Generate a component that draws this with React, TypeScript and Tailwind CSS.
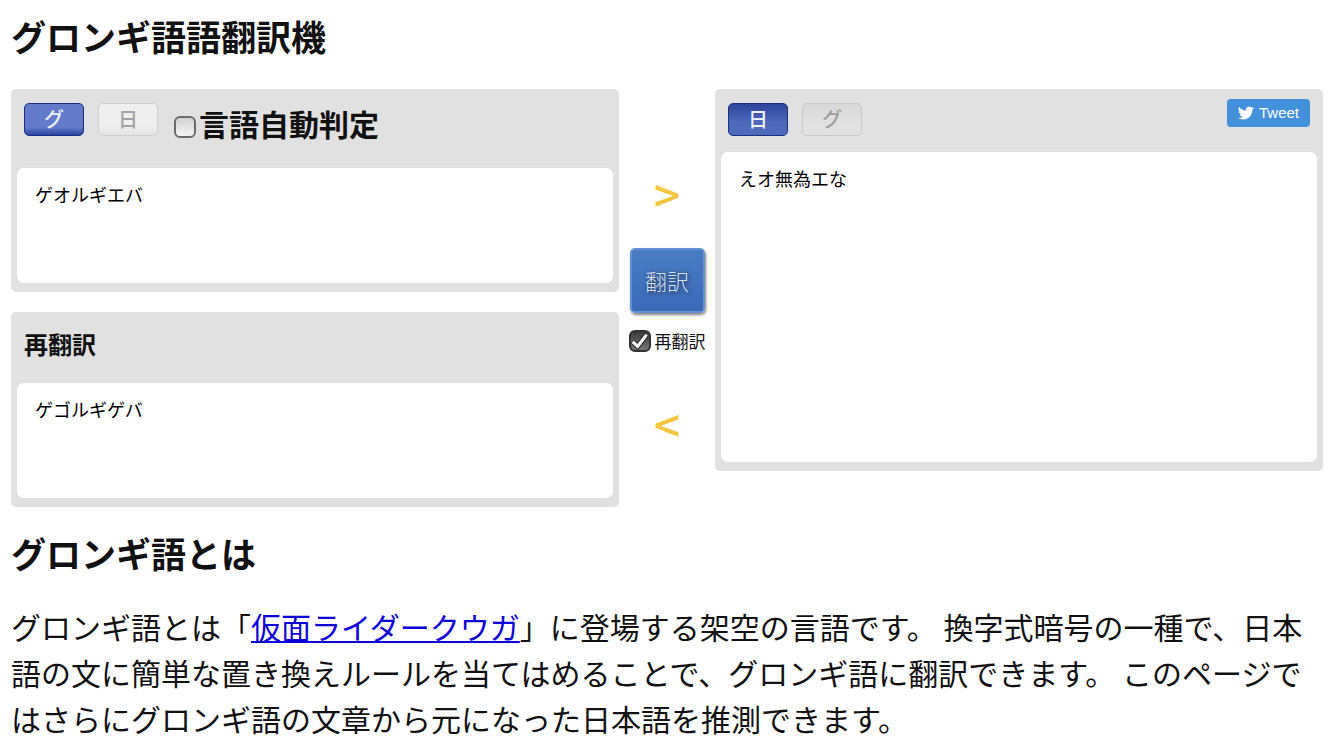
import { useState } from "react";
import type { ReactNode } from "react";

const HEADING = "text-[35px] leading-[50px] font-bold";

interface LangButtonProps {
  className: string;
  pressed: boolean;
  children: ReactNode;
}

function LangButton({ className, pressed, children }: LangButtonProps) {
  return (
    <button
      type="button"
      aria-pressed={pressed}
      className={`flex h-[33px] w-[60px] items-center justify-center rounded-[5px] border pb-[2px] text-[20px] leading-none font-medium ${className}`}
    >
      {children}
    </button>
  );
}

interface TextPanelProps {
  label: string;
  defaultValue: string;
  headerClass: string;
  areaClass: string;
  children: ReactNode;
}

function TextPanel({ label, defaultValue, headerClass, areaClass, children }: TextPanelProps) {
  return (
    <section className="rounded-[5px] bg-[#e1e1e1] px-[6px] pb-[9px]">
      <div className={`flex px-[7px] ${headerClass}`}>{children}</div>
      <div className="h-[6px] border-t border-[#e5e5e5]" />
      <textarea
        aria-label={label}
        defaultValue={defaultValue}
        spellCheck={false}
        className={`block w-full resize-none rounded-[7px] bg-white px-[18px] py-[14px] text-[18px] leading-6 text-black outline-none ${areaClass}`}
      />
    </section>
  );
}

interface CheckProps {
  id: string;
  checked: boolean;
  onChange: (checked: boolean) => void;
}

// Glossy checkbox: light when off, dark with a white tick when on.
function Check({ id, checked, onChange }: CheckProps) {
  return (
    <span className="grid size-[22px] shrink-0">
      <input
        id={id}
        type="checkbox"
        checked={checked}
        onChange={(e) => onChange(e.target.checked)}
        className="col-start-1 row-start-1 size-[22px] appearance-none rounded-[6px] border-2 border-[#6b6b6b] bg-linear-to-b from-[#d2d2d2] to-[#f4f4f4] checked:border-[#333] checked:from-[#3b3b3b] checked:to-[#777]"
      />
      {checked && (
        <svg viewBox="0 0 22 22" className="pointer-events-none col-start-1 row-start-1 size-[22px]" fill="none">
          <path d="M3.8 11.8 8.6 16.4 17.6 4.6" stroke="#222" strokeWidth="5" />
          <path d="M3.8 11.8 8.6 16.4 17.6 4.6" stroke="#fff" strokeWidth="3.2" />
        </svg>
      )}
    </span>
  );
}

export default function App() {
  const [autoDetect, setAutoDetect] = useState(false);
  const [retranslate, setRetranslate] = useState(true);

  return (
    <main
      lang="ja"
      className="bg-white px-[11px] pt-[11px] font-['Noto_Sans_CJK_JP',sans-serif] text-[#111]"
    >
      <h1 className={HEADING}>グロンギ語語翻訳機</h1>

      <div className="mt-7 flex items-start">
        <div className="flex min-w-0 flex-1 flex-col gap-5">
          <TextPanel label="原文" defaultValue="ゲオルギエバ" headerClass="h-[73px] pt-[14px]" areaClass="h-[115px]">
            <LangButton
              pressed
              className="border-[#1b2f80] bg-linear-to-b from-[#647bcb] from-75% to-[#2c449f] text-[#eef1ff]"
            >
              グ
            </LangButton>
            <LangButton
              pressed={false}
              className="ml-[14px] border-[#cfcfcf] bg-linear-to-b from-[#efefef] from-70% to-[#e4e4e4] text-[#a3a3a3]"
            >
              日
            </LangButton>
            <div className="ml-4 flex h-10 items-center gap-[3px] text-[30px] leading-10 font-bold">
              <div className="pt-2">
                <Check id="auto-detect" checked={autoDetect} onChange={setAutoDetect} />
              </div>
              <label htmlFor="auto-detect">言語自動判定</label>
            </div>
          </TextPanel>

          <TextPanel label="再翻訳の結果" defaultValue="ゲゴルギゲバ" headerClass="h-[65px] pt-[14px]" areaClass="h-[115px]">
            <h2 className="text-[24px] leading-9 font-bold">再翻訳</h2>
          </TextPanel>
        </div>

        <div className="flex w-24 shrink-0 flex-col items-center pt-20">
          <span className="text-[46px] leading-[48px] font-medium text-[#f3c63f]">&gt;</span>
          <button
            type="button"
            className="mt-[31px] h-[65px] w-[75px] rounded-[5px] border-2 border-[#6391d3] bg-linear-to-b from-[#487dc2] to-[#3b69b9] text-[22px] font-light text-[#d3dff2] shadow-[1px_2px_3px_rgba(0,0,0,0.5)] [text-shadow:1px_1px_4px_rgba(0,0,0,0.7)]"
          >
            翻訳
          </button>
          <div className="mt-4 flex h-6 items-center gap-1 text-[17px] leading-6">
            <Check id="retranslate" checked={retranslate} onChange={setRetranslate} />
            <label htmlFor="retranslate" className="whitespace-nowrap">
              再翻訳
            </label>
          </div>
          <span className="mt-[46px] text-[46px] leading-[48px] font-medium text-[#f3c63f]">&lt;</span>
        </div>

        <div className="min-w-0 flex-1">
          <TextPanel label="訳文" defaultValue="えオ無為エな" headerClass="h-[57px] pt-[14px]" areaClass="h-[310px]">
            <LangButton
              pressed
              className="border-[#1b2f80] bg-linear-to-b from-[#2d459c] to-[#4f69bb] to-60% text-[#eef1ff]"
            >
              日
            </LangButton>
            <LangButton
              pressed={false}
              className="ml-[14px] border-[#c9c9c9] bg-linear-to-b from-[#d8d8d8] to-[#e2e2e2] to-60% text-[#9f9f9f]"
            >
              グ
            </LangButton>
            <a
              href="#tweet"
              className="-mt-1 ml-auto flex h-7 w-[83px] items-center justify-center gap-[5px] rounded-[4px] bg-[#4390db] font-['Liberation_Sans',sans-serif] text-[15px] text-white"
            >
              <svg viewBox="0 0 24 24" className="size-4" fill="currentColor" aria-hidden="true">
                <path d="M23.95 4.57a10 10 0 0 1-2.82.77 4.96 4.96 0 0 0 2.16-2.72 9.9 9.9 0 0 1-3.13 1.18 4.92 4.92 0 0 0-8.38 4.48A13.93 13.93 0 0 1 1.64 3.16a4.92 4.92 0 0 0 1.52 6.57 4.9 4.9 0 0 1-2.23-.61v.06a4.92 4.92 0 0 0 3.95 4.83 5 5 0 0 1-2.21.08 4.94 4.94 0 0 0 4.6 3.42A9.87 9.87 0 0 1 0 19.54a13.99 13.99 0 0 0 7.55 2.21c9.05 0 14-7.5 14-13.98 0-.21 0-.42-.02-.63a9.94 9.94 0 0 0 2.46-2.55z" />
              </svg>
              Tweet
            </a>
          </TextPanel>
        </div>
      </div>

      <h2 className={`mt-[21px] ${HEADING}`}>グロンギ語とは</h2>
      <p className="mt-[25px] text-[30px] leading-[46px]">
        グロンギ語とは「
        <a href="#kuuga" className="text-[#0d00d8] underline decoration-2 underline-offset-2">
          仮面ライダークウガ
        </a>
        」に登場する架空の言語です。 換字式暗号の一種で、日本語の文に簡単な置き換えルールを当てはめることで、グロンギ語に翻訳できます。
        このページではさらにグロンギ語の文章から元になった日本語を推測できます。
      </p>
    </main>
  );
}
